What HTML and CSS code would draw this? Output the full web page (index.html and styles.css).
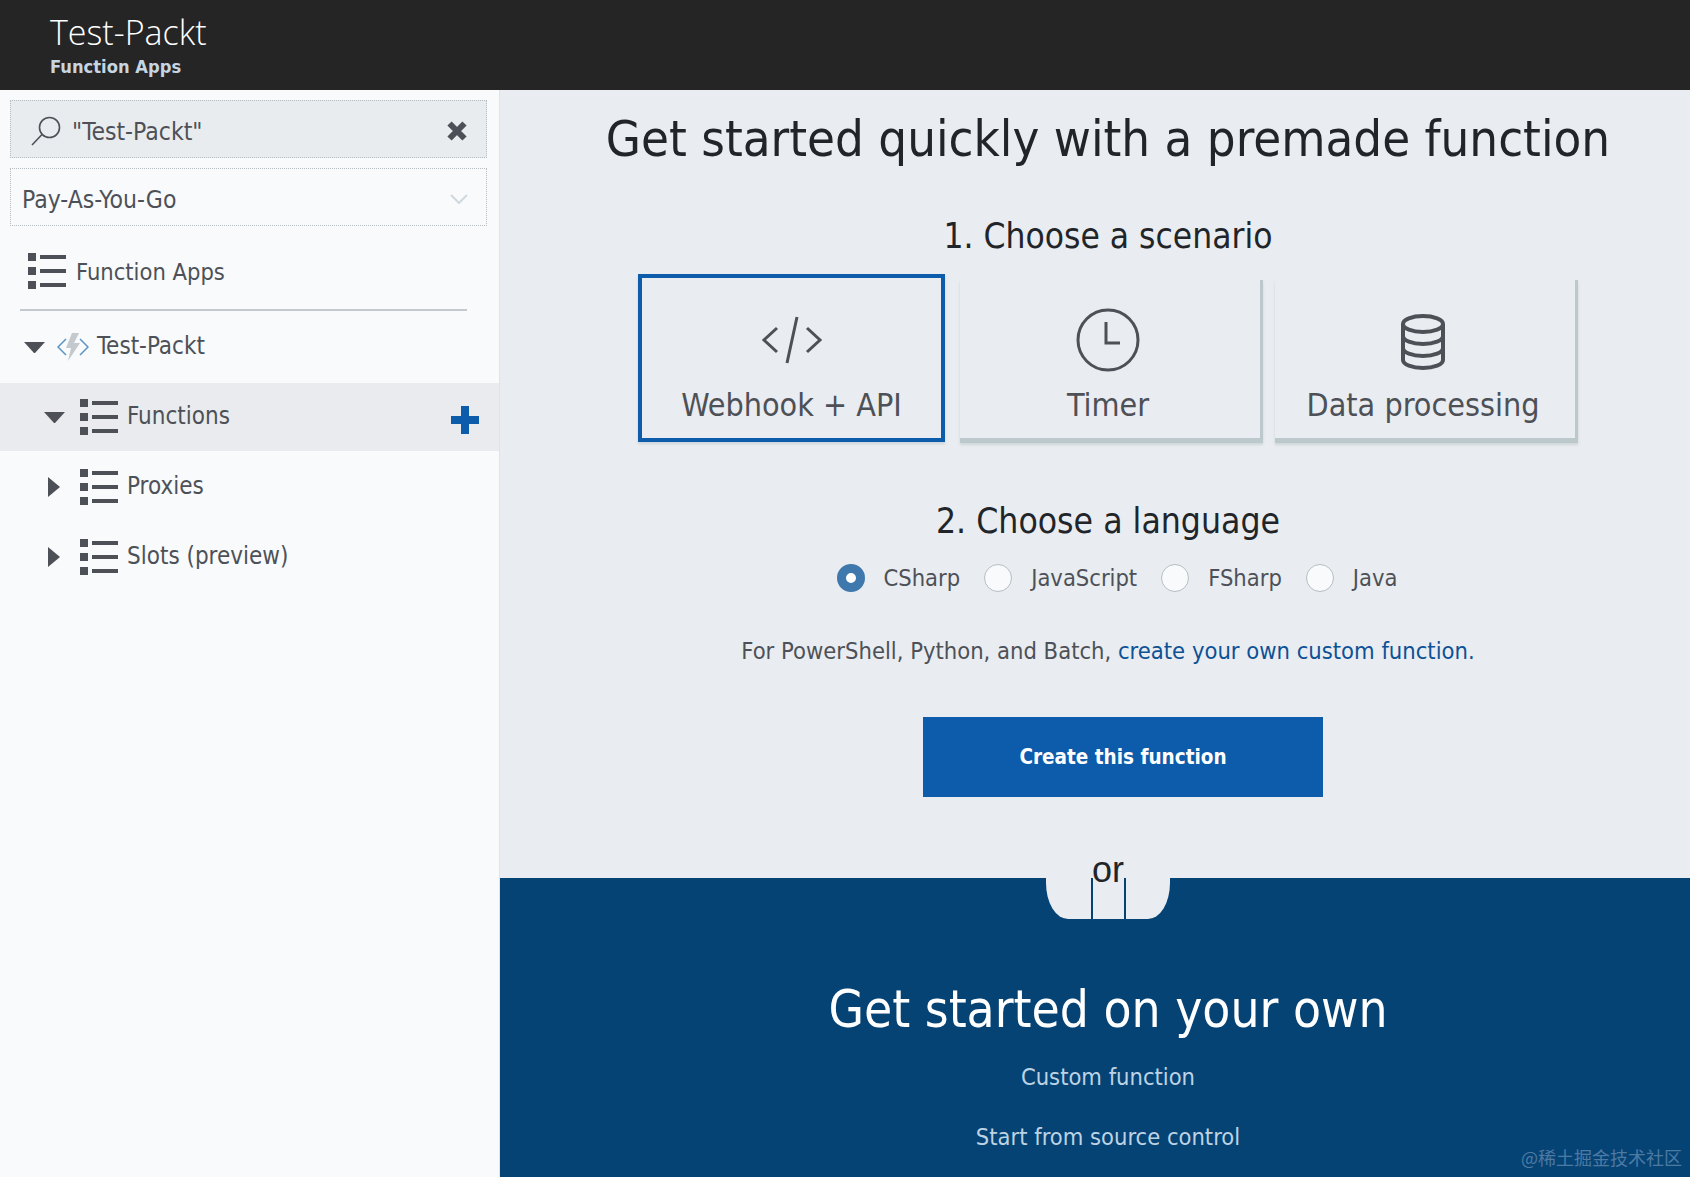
FILE: index.html
```html
<!DOCTYPE html>
<html lang="en">
<head>
    <meta charset="UTF-8">
    <meta name="viewport" content="width=device-width, initial-scale=1.0">
    <title>Test-Packt - Function Apps</title>
    <link rel="stylesheet" href="styles.css">
</head>
<body>
    <header class="top-bar">
        <h1>Test-Packt</h1>
        <p>Function Apps</p>
    </header>

    <div class="page">
        <nav class="sidebar">
            <div class="search-box">
                <svg class="search-icon" viewBox="0 0 30 30"><circle cx="18.5" cy="11.5" r="10" /><path d="M11 18.5 1 29" /></svg>
                <span class="search-text">"Test-Packt"</span>
                <svg class="clear-icon" viewBox="0 0 22 22"><path d="M3.5 3.5 18.5 18.5M18.5 3.5 3.5 18.5" /></svg>
            </div>
            <div class="select-box">
                <span class="select-text">Pay-As-You-Go</span>
                <svg class="chevron" viewBox="0 0 18 10"><path d="M1 1 9 9 17 1" /></svg>
            </div>

            <div class="tree-row root-row">
                <svg class="list-icon" viewBox="0 0 38 36"><path d="M0 0h8v8H0zM0 14h8v8H0zM0 28h8v8H0zM12 2h26v4H12zM12 16h26v4H12zM12 30h26v4H12z" /></svg>
                <span>Function Apps</span>
            </div>
            <div class="divider"></div>

            <div class="tree-row app-row">
                <span class="caret-down"></span>
                <svg class="app-icon" viewBox="0 0 32 30">
                    <path class="app-bracket" d="M9 7 1 15 9 23M23 7 31 15 23 23" />
                    <path class="app-bolt" d="M15 1H22L17 11H23L11 29 14 16H9z" />
                </svg>
                <span>Test-Packt</span>
            </div>
            <div class="tree-row child-row selected">
                <span class="caret-down"></span>
                <svg class="list-icon" viewBox="0 0 38 36"><path d="M0 0h8v8H0zM0 14h8v8H0zM0 28h8v8H0zM12 2h26v4H12zM12 16h26v4H12zM12 30h26v4H12z" /></svg>
                <span>Functions</span>
                <svg class="plus-icon" viewBox="0 0 28 28"><path d="M14 0V28M0 14H28" /></svg>
            </div>
            <div class="tree-row child-row">
                <span class="caret-right"></span>
                <svg class="list-icon" viewBox="0 0 38 36"><path d="M0 0h8v8H0zM0 14h8v8H0zM0 28h8v8H0zM12 2h26v4H12zM12 16h26v4H12zM12 30h26v4H12z" /></svg>
                <span>Proxies</span>
            </div>
            <div class="tree-row child-row">
                <span class="caret-right"></span>
                <svg class="list-icon" viewBox="0 0 38 36"><path d="M0 0h8v8H0zM0 14h8v8H0zM0 28h8v8H0zM12 2h26v4H12zM12 16h26v4H12zM12 30h26v4H12z" /></svg>
                <span>Slots (preview)</span>
            </div>
        </nav>

        <main class="content">
            <section class="quick-start">
                <h2 class="main-title">Get started quickly with a premade function</h2>
                <h3 class="step-title">1. Choose a scenario</h3>
                <div class="scenarios">
                    <div class="scenario active">
                        <div class="icon-box"><svg class="icon-code" viewBox="0 0 62 48"><path d="M16 12 3 24 16 36M46 12 59 24 46 36M36 1 26 47" /></svg></div>
                        <span>Webhook + API</span>
                    </div>
                    <div class="scenario">
                        <div class="icon-box"><svg class="icon-timer" viewBox="0 0 64 64"><circle cx="32" cy="32" r="30" /><path d="M30 14V35H44" /></svg></div>
                        <span>Timer</span>
                    </div>
                    <div class="scenario">
                        <div class="icon-box"><svg class="icon-db" viewBox="0 0 46 56"><ellipse cx="23" cy="10" rx="20" ry="8" /><path d="M3 10V46C3 50.5 12 54 23 54S43 50.5 43 46V10M3 22C3 26.5 12 30 23 30S43 26.5 43 22M3 34C3 38.5 12 42 23 42S43 38.5 43 34" /></svg></div>
                        <span>Data processing</span>
                    </div>
                </div>

                <h3 class="step-title language-title">2. Choose a language</h3>
                <div class="languages">
                    <label class="lang"><span class="radio checked"></span>CSharp</label>
                    <label class="lang"><span class="radio"></span>JavaScript</label>
                    <label class="lang"><span class="radio"></span>FSharp</label>
                    <label class="lang"><span class="radio"></span>Java</label>
                </div>
                <p class="custom-note">For PowerShell, Python, and Batch, <a href="#">create your own custom function.</a></p>
                <button class="btn-create">Create this function</button>
            </section>

            <section class="own-start">
                <div class="or-notch">
                    <span class="or-line"></span>
                    <span class="or-text">or</span>
                </div>
                <h2 class="own-title">Get started on your own</h2>
                <a class="own-link" href="#">Custom function</a>
                <a class="own-link" href="#">Start from source control</a>
                <span class="watermark">@稀土掘金技术社区</span>
            </section>
        </main>
    </div>
</body>
</html>
```

FILE: styles.css
```css
* {
    box-sizing: border-box;
}
html, body {
    height: 100%;
}
body {
    margin: 0;
    overflow: hidden;
    display: flex;
    flex-direction: column;
    font-family: "DejaVu Sans", Verdana, sans-serif;
    font-stretch: condensed;
    color: #4d5157;
    background: #e9ecf0;
}

/* top bar */
.top-bar {
    height: 90px;
    flex: none;
    padding: 12px 0 0 50px;
    background: #252525;
}
.top-bar h1 {
    margin: 0;
    height: 40px;
    font-family: "Open Sans", sans-serif;
    font-stretch: normal;
    font-size: 34px;
    line-height: 40px;
    font-weight: 300;
    color: #fff;
}
.top-bar p {
    margin: 3px 0 0;
    font-size: 18.2px;
    line-height: 24px;
    font-weight: bold;
    color: #c5d6e2;
}

.page {
    flex: 1;
    display: flex;
    min-height: 0;
}

/* sidebar */
.sidebar {
    width: 500px;
    flex: none;
    padding-top: 10px;
    background: #f8fafc;
    border-right: 1px solid #dfe3e8;
    font-size: 24px;
}
.search-box,
.select-box {
    display: flex;
    align-items: center;
    margin: 0 12px 0 10px;
    height: 58px;
    padding-top: 3px;
    border: 1px dotted #b5bcc2;
    font-size: 24.5px;
}
.search-box {
    padding-left: 20px;
    padding-right: 18px;
    background: #e9ecef;
}
.search-icon {
    width: 30px;
    height: 30px;
    fill: none;
    stroke: #4d5157;
    stroke-width: 1.6;
}
.search-text {
    margin: 2px 0 0 11px;
    flex: 1;
}
.clear-icon {
    width: 22px;
    height: 22px;
    fill: none;
    stroke: #4d5157;
    stroke-width: 6;
}
.select-box {
    margin-top: 10px;
    padding-left: 11px;
    padding-right: 18px;
    justify-content: space-between;
}
.select-text {
    margin-top: 2px;
}
.chevron {
    width: 18px;
    height: 10px;
    fill: none;
    stroke: #d0d8dd;
    stroke-width: 2;
}

.tree-row {
    display: flex;
    align-items: center;
}
.tree-row > span:not([class]) {
    margin-top: -2px;
    white-space: nowrap;
}
.root-row {
    height: 68px;
    margin-top: 11px;
    padding-left: 28px;
    gap: 10px;
    font-size: 23.5px;
}
.tree-row.root-row > span {
    margin-top: 2px;
}
.divider {
    height: 2px;
    margin: 4px 32px 0 20px;
    background: #c3c9ce;
}
.app-row {
    height: 72px;
    padding-left: 24px;
}
.app-row .app-icon {
    width: 32px;
    height: 30px;
    margin: 0 8px 0 11px;
}
.app-bracket {
    fill: none;
    stroke: #5b92c4;
    stroke-width: 1.5;
}
.app-bolt {
    fill: #c4c9cd;
}
.child-row {
    position: relative;
    height: 70px;
    padding-left: 44px;
    gap: 9px;
}
.child-row.selected {
    height: 68px;
    margin-bottom: 1px;
    background: #e9ebee;
}
.list-icon {
    width: 38px;
    height: 36px;
    fill: #4d5157;
    flex: none;
}
.caret-down,
.caret-right {
    display: block;
    flex: none;
    width: 0;
    height: 0;
    border-style: solid;
    border-color: transparent;
}
.caret-down {
    width: 21px;
    margin-right: 1px;
    border-width: 11px 10.5px 0;
    border-top-color: #4d5157;
}
.caret-right {
    width: 12px;
    margin: 0 6px 0 4px;
    border-width: 10px 0 10px 12px;
    border-left-color: #4d5157;
}
.child-row .list-icon {
    margin-left: 5px;
}
.plus-icon {
    position: absolute;
    top: 23px;
    right: 20px;
    width: 28px;
    height: 28px;
    fill: none;
    stroke: #0d5bab;
    stroke-width: 8;
}

/* main content */
.content {
    flex: 1;
    display: flex;
    flex-direction: column;
    min-width: 0;
}
.quick-start {
    height: 788px;
    flex: none;
    display: flex;
    flex-direction: column;
    align-items: center;
    padding-left: 26px;
    color: #4d5157;
}
.main-title {
    margin: 14px 0 0;
    font-size: 50.5px;
    line-height: 70px;
    font-weight: normal;
    color: #212529;
    white-space: nowrap;
}
.step-title {
    margin: 40px 0 0;
    font-size: 35px;
    line-height: 44px;
    font-weight: normal;
    color: #212529;
}
.scenarios {
    align-self: flex-start;
    display: flex;
    align-items: flex-start;
    height: 168px;
    margin: 16px 0 0 112px;
}
.scenario {
    width: 303px;
    height: 163px;
    margin-top: 6px;
    margin-right: 12px;
    display: flex;
    flex-direction: column;
    align-items: center;
    padding: 28px 4px 0 0;
    font-size: 32px;
    line-height: 44px;
    border-right: 3px solid #bcc8cc;
    border-bottom: 5px solid #bcc8cc;
    box-shadow: 0 2px 2px rgba(188, 200, 204, 0.6);
}
.scenario.active {
    width: 307px;
    height: 168px;
    margin-top: 0;
    margin-right: 15px;
    padding: 30px 0 0;
    border: 4px solid #0d5bab;
}
.icon-box {
    height: 64px;
    margin-bottom: 11px;
    display: flex;
    align-items: center;
}
.icon-box svg {
    fill: none;
    stroke: #4d5157;
    stroke-width: 3;
}
.icon-code {
    width: 62px;
    height: 48px;
}
.icon-timer {
    width: 64px;
    height: 64px;
}
.icon-db {
    width: 46px;
    height: 56px;
    margin-top: 4px;
}
.icon-box .icon-db {
    stroke-width: 4;
}
.language-title {
    margin-top: 57px;
    font-size: 35.2px;
}
.languages {
    display: flex;
    margin: 21px 0 0 18px;
    font-size: 23.5px;
    line-height: 28px;
}
.lang {
    display: flex;
    align-items: center;
    margin-right: 24px;
}
.lang:last-child {
    margin-right: 0;
}
.radio {
    width: 28px;
    height: 28px;
    margin-right: 19px;
    border: 1px solid #b8bdc2;
    border-radius: 50%;
    background: #f8fafc;
}
.radio.checked {
    border: 9px solid #3f78ad;
    background: #fff;
}
.custom-note {
    margin: 43px 0 0;
    font-size: 23.55px;
    line-height: 32px;
}
.custom-note a {
    color: #0d5196;
    text-decoration: none;
}
.btn-create {
    width: 400px;
    height: 80px;
    margin: 50px 0 0 30px;
    border: none;
    background: #0d5bab;
    color: #fff;
    font-family: inherit;
    font-stretch: inherit;
    font-size: 20.5px;
    font-weight: bold;
}

/* bottom band */
.own-start {
    position: relative;
    flex: 1;
    display: flex;
    flex-direction: column;
    align-items: center;
    padding-left: 26px;
    background: #064375;
    color: #fff;
}
.or-notch {
    position: absolute;
    top: 0;
    left: 546px;
    width: 124px;
    height: 41px;
    background: #e9ecf0;
    border-radius: 0 0 22px 22px / 0 0 36px 36px;
}
.or-line {
    position: absolute;
    left: 45px;
    top: 0;
    width: 35px;
    height: 41px;
    border: solid #064375;
    border-width: 0 2px;
}
.or-text {
    position: absolute;
    left: 0;
    right: 0;
    top: -28px;
    text-align: center;
    font-family: "Liberation Sans", Arial, sans-serif;
    font-stretch: normal;
    font-size: 36px;
    line-height: 40px;
    color: #212529;
}
.own-title {
    margin: 97px 0 0;
    font-size: 51px;
    line-height: 70px;
    font-weight: normal;
    white-space: nowrap;
}
.own-link {
    margin-top: 16px;
    font-size: 23.5px;
    line-height: 32px;
    color: #bdd3e4;
    text-decoration: none;
}
.own-link + .own-link {
    margin-top: 28px;
}
.watermark {
    position: absolute;
    right: 8px;
    bottom: 8px;
    font-family: "Noto Sans CJK SC", sans-serif;
    font-stretch: normal;
    font-size: 18px;
    line-height: 24px;
    color: #4d7aa3;
}
```
